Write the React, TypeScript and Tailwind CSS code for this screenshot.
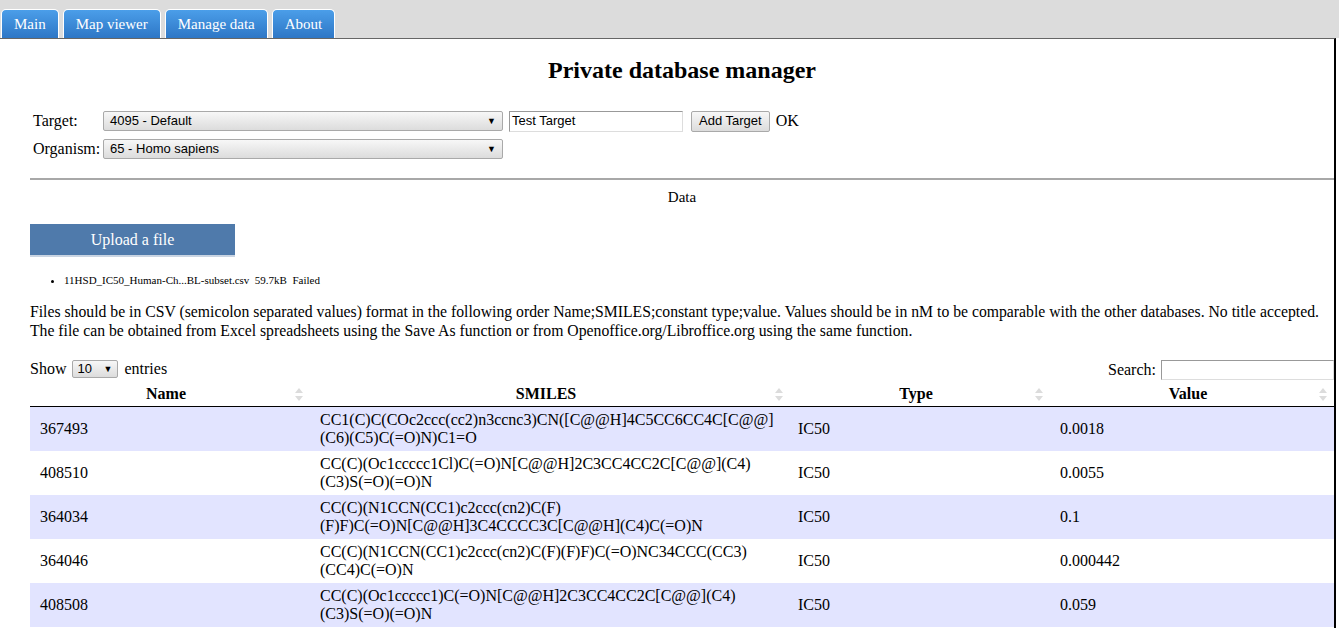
import React from "react";

const tabs = ["Main", "Map viewer", "Manage data", "About"];

const rows = [
  {
    name: "367493",
    smiles: "CC1(C)C(COc2ccc(cc2)n3ccnc3)CN([C@@H]4C5CC6CC4C[C@@](C6)(C5)C(=O)N)C1=O",
    type: "IC50",
    value: "0.0018",
  },
  {
    name: "408510",
    smiles: "CC(C)(Oc1ccccc1Cl)C(=O)N[C@@H]2C3CC4CC2C[C@@](C4)(C3)S(=O)(=O)N",
    type: "IC50",
    value: "0.0055",
  },
  {
    name: "364034",
    smiles: "CC(C)(N1CCN(CC1)c2ccc(cn2)C(F)(F)F)C(=O)N[C@@H]3C4CCCC3C[C@@H](C4)C(=O)N",
    type: "IC50",
    value: "0.1",
  },
  {
    name: "364046",
    smiles: "CC(C)(N1CCN(CC1)c2ccc(cn2)C(F)(F)F)C(=O)NC34CCC(CC3)(CC4)C(=O)N",
    type: "IC50",
    value: "0.000442",
  },
  {
    name: "408508",
    smiles: "CC(C)(Oc1ccccc1)C(=O)N[C@@H]2C3CC4CC2C[C@@](C4)(C3)S(=O)(=O)N",
    type: "IC50",
    value: "0.059",
  },
];

function SortIcon() {
  return (
    <svg width="8" height="13" viewBox="0 0 8 13" className="shrink-0">
      <path d="M4 0 L8 5 L0 5 Z" fill="#dcdcdc" />
      <path d="M4 13 L8 8 L0 8 Z" fill="#dcdcdc" />
    </svg>
  );
}

function FakeSelect({ label, width }: { label: string; width: string }) {
  return (
    <div
      className={`${width} h-[20px] flex items-center justify-between pl-[6px] pr-[6px] border border-[#a9a9a9] rounded-[2px] bg-gradient-to-b from-[#f7f7f7] to-[#dcdcdc] text-[13px] text-black font-['Liberation_Sans',Arial,sans-serif]`}
    >
      <span>{label}</span>
      <span className="text-[9px] leading-none">▼</span>
    </div>
  );
}

export default function App() {
  return (
    <div className="min-h-screen bg-white font-['Liberation_Serif','Times_New_Roman',serif] text-black text-[16px]">
      {/* Tab bar */}
      <div className="h-[38px] bg-[#dcdcdc] flex items-end pl-[1px] gap-[4px]">
        {tabs.map((t) => (
          <div
            key={t}
            className="h-[29px] px-[12px] flex items-center border border-b-0 border-white rounded-t-[5px] bg-gradient-to-b from-[#4b9ee9] to-[#2e77c6] text-white text-[15px]"
          >
            {t}
          </div>
        ))}
      </div>

      <div className="border-t border-[#666] mr-[3px] border-r-[2px] border-r-black pl-[30px] pb-[40px]">
        <h1 className="text-center text-[24px] font-bold pt-[17px] leading-[28px]">
          Private database manager
        </h1>

        {/* Form */}
        <div className="mt-[27px] flex flex-col gap-[8px]">
          <div className="flex items-center h-[20px]">
            <span className="w-[73px] pl-[3px]">Target:</span>
            <FakeSelect label="4095 - Default" width="w-[400px]" />
            <div className="ml-[6px] w-[174px] h-[21px] border border-[#999] border-b-[#ddd] border-r-[#ddd] px-[2px] flex items-center text-[13px] font-['Liberation_Sans',Arial,sans-serif]">
              Test Target
            </div>
            <div className="ml-[8px] h-[21px] px-[7px] flex items-center border border-[#a9a9a9] rounded-[2px] bg-gradient-to-b from-[#f7f7f7] to-[#dcdcdc] text-[13px] font-['Liberation_Sans',Arial,sans-serif]">
              Add Target
            </div>
            <span className="ml-[6px]">OK</span>
          </div>
          <div className="flex items-center h-[20px]">
            <span className="w-[73px] pl-[3px]">Organism:</span>
            <FakeSelect label="65 - Homo sapiens" width="w-[400px]" />
          </div>
        </div>

        <div className="mt-[19px] border-t-2 border-[#a8a8a8]" />
        <div className="text-center text-[15px] mt-[8px] leading-[18px]">Data</div>

        <div className="mt-[18px] w-[205px] h-[33px] bg-[#4f7aab] border-b-2 border-[#c9d4e2] text-white flex items-center justify-center text-[16px]">
          Upload a file
        </div>

        <ul className="mt-[16px] pl-[34px] list-disc text-[11px] leading-[14px]">
          <li>
            11HSD_IC50_Human-Ch...BL-subset.csv&nbsp;&nbsp;59.7kB&nbsp;&nbsp;Failed
          </li>
        </ul>

        <p className="mt-[15px] leading-[19px] text-[15.72px]">
          <span className="whitespace-nowrap">
            Files should be in CSV (semicolon separated values) format in the following order
            Name;SMILES;constant type;value. Values should be in nM to be comparable with the other
            databases. No title accepted.
          </span>
          <br />
          The file can be obtained from Excel spreadsheets using the Save As function or from
          Openoffice.org/Libroffice.org using the same function.
        </p>

        {/* Table controls */}
        <div className="mt-[16px] flex items-center justify-between">
          <div className="flex items-center">
            <span>Show</span>
            <div className="ml-[6px] w-[46px] h-[18px] flex items-center justify-between pl-[4px] pr-[5px] border border-[#a9a9a9] rounded-[2px] bg-gradient-to-b from-[#f7f7f7] to-[#dcdcdc] text-[13px] font-['Liberation_Sans',Arial,sans-serif]">
              <span>10</span>
              <span className="text-[9px] leading-none">▼</span>
            </div>
            <span className="ml-[6px]">entries</span>
          </div>
          <div className="flex items-center mt-[2px]">
            <span>Search:</span>
            <div className="ml-[5px] w-[173px] h-[20px] border border-[#999] border-b-[#ddd] border-r-[#ddd]" />
          </div>
        </div>

        <table className="table-fixed w-full border-collapse">
          <colgroup>
            <col className="w-[280px]" />
            <col className="w-[480px]" />
            <col className="w-[260px]" />
            <col />
          </colgroup>
          <thead>
            <tr className="border-b border-black">
              {["Name", "SMILES", "Type", "Value"].map((h) => (
                <th key={h} className="py-[3px] px-[7px] leading-[18px] font-bold">
                  <div className="flex items-center">
                    <span className="flex-1 text-center">{h}</span>
                    <SortIcon />
                  </div>
                </th>
              ))}
            </tr>
          </thead>
          <tbody>
            {rows.map((r, i) => (
              <tr key={r.name} className={i % 2 === 0 ? "bg-[#e2e4ff]" : "bg-white"}>
                <td className="h-[44px] px-[10px] py-[4px] leading-[18px] align-middle">{r.name}</td>
                <td className="px-[10px] py-[4px] leading-[18px] align-middle">{r.smiles}</td>
                <td className="px-[8px] py-[4px] leading-[18px] align-middle">{r.type}</td>
                <td className="px-[10px] py-[4px] leading-[18px] align-middle">{r.value}</td>
              </tr>
            ))}
          </tbody>
        </table>
      </div>
    </div>
  );
}
